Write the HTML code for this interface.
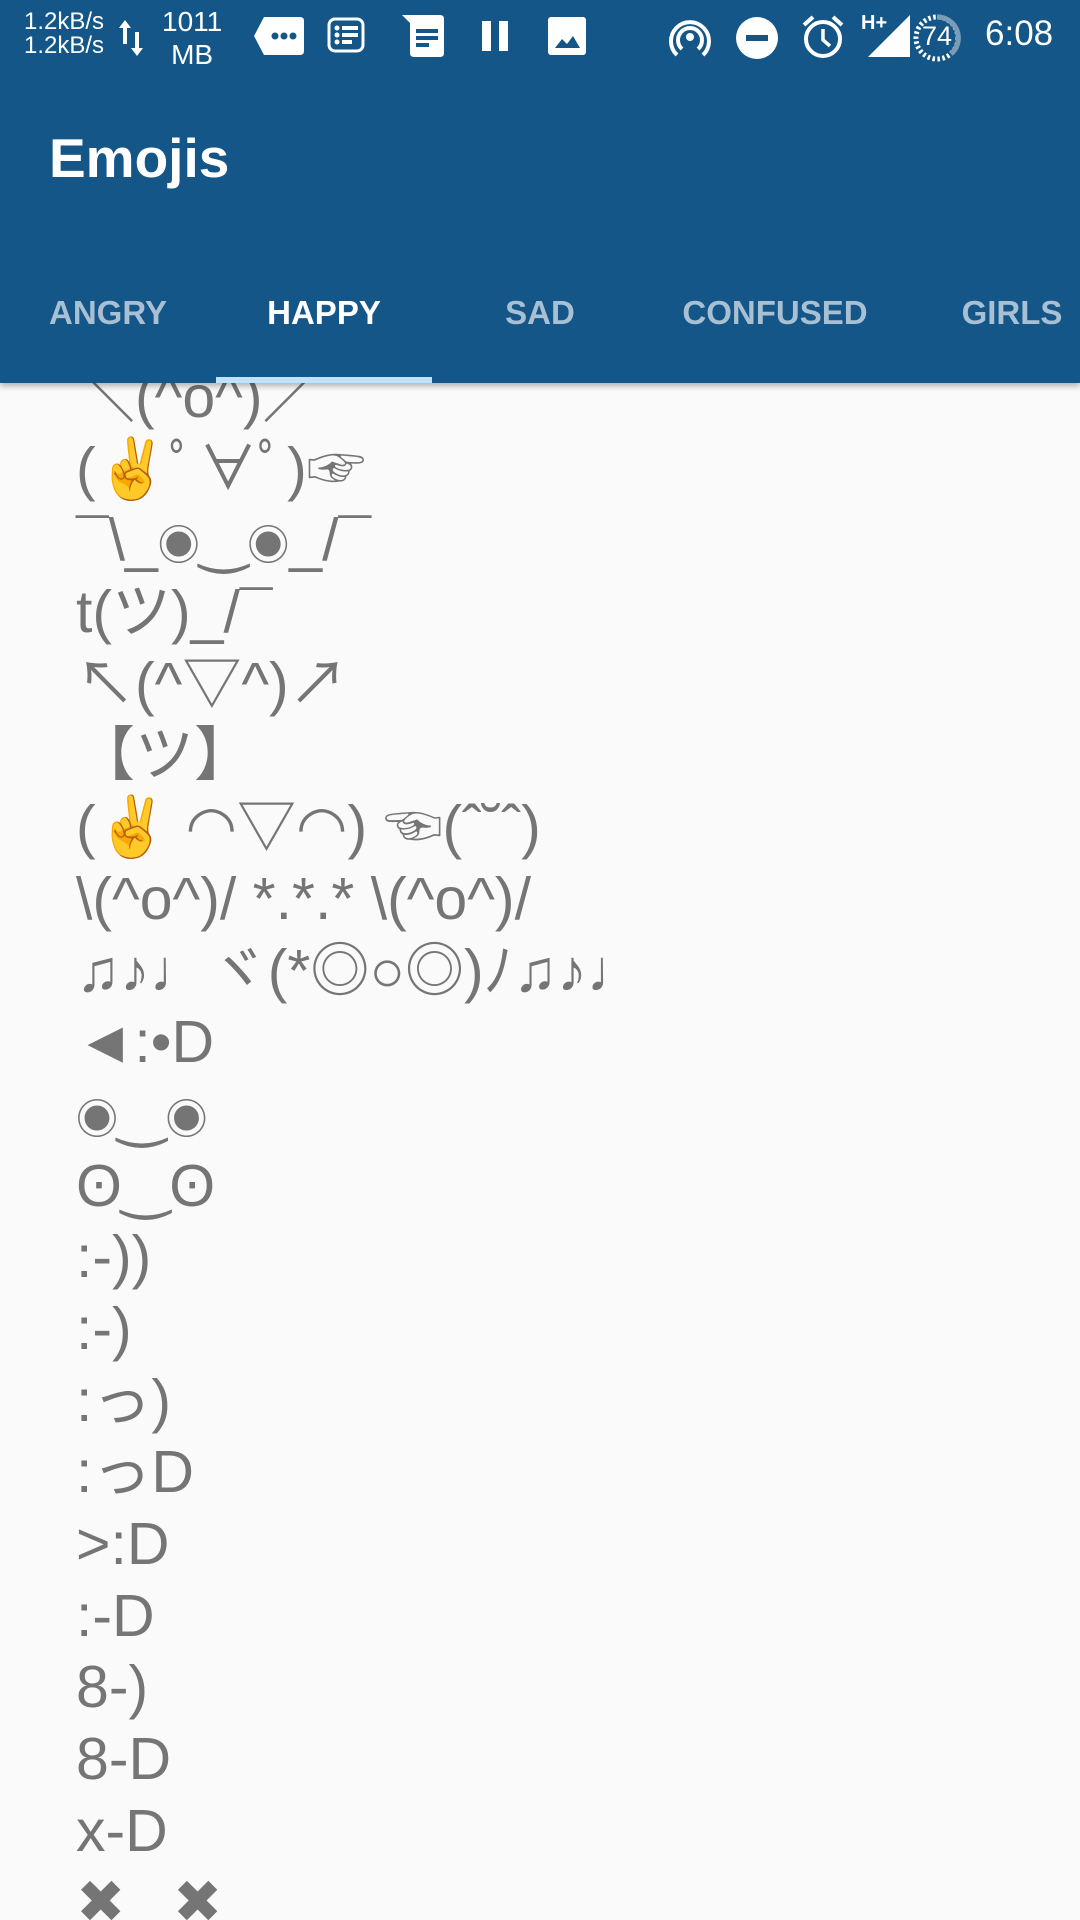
<!DOCTYPE html>
<html><head><meta charset="utf-8"><style>
*{margin:0;padding:0;box-sizing:border-box}
html,body{width:1080px;height:1920px;overflow:hidden;background:#fafafa}
body{position:relative;font-family:"Liberation Sans","Noto Sans CJK JP",sans-serif}
#bar{position:absolute;left:0;top:0;width:1080px;height:383px;background:#135687;z-index:2;box-shadow:0 3px 6px rgba(0,0,0,.3)}
.w{color:#fff;position:absolute;white-space:nowrap}
.tab{position:absolute;top:294px;font-size:33px;font-weight:bold;color:#a9c0d4;text-align:center;width:216px}
#ind{position:absolute;left:216px;top:377px;width:216px;height:6px;background:#bfe3fb}
#list{position:absolute;left:0;top:383px;width:1080px;height:1537px;overflow:hidden}
#inner{position:absolute;left:76px;top:-21px;font-size:59px;color:#757575;white-space:pre}
#inner div{height:71.7px;line-height:71.7px;overflow:visible}
.e{color:#f6cf72}
.s{font-size:42px;line-height:0}
</style></head><body>
<div id="bar">
 <div class="w" style="left:24px;top:10px;font-size:24px;line-height:24px">1.2kB/s<br>1.2kB/s</div>
 <svg class="w" style="left:117px;top:18px" width="28" height="40" viewBox="0 0 28 40"><path d="M8 2 L2 10 H6 V26 H10 V10 H14 Z M20 38 L26 30 H22 V14 H18 V30 H14 Z" fill="#fff"/></svg>
 <div class="w" style="left:162px;top:5px;font-size:28px;line-height:33px;text-align:center">1011<br>MB</div>
 <svg class="w" style="left:254px;top:17px" width="50" height="38"><path d="M10 0 H46 Q50 0 50 4 V34 Q50 38 46 38 H10 L0 19 Z" fill="#fff"/><circle cx="21" cy="19" r="3.5" fill="#135687"/><circle cx="30" cy="19" r="3.5" fill="#135687"/><circle cx="39" cy="19" r="3.5" fill="#135687"/></svg>
 <svg class="w" style="left:327px;top:17px" width="38" height="36"><rect x="2" y="2" width="34" height="32" rx="6" fill="none" stroke="#fff" stroke-width="3"/><circle cx="10" cy="11" r="2.5" fill="#fff"/><circle cx="10" cy="18" r="2.5" fill="#fff"/><circle cx="10" cy="25" r="2.5" fill="#fff"/><rect x="15" y="9" width="16" height="4" fill="#fff"/><rect x="15" y="16" width="16" height="4" fill="#fff"/><rect x="15" y="23" width="10" height="4" fill="#fff"/></svg>
 <svg class="w" style="left:402px;top:15px" width="42" height="42"><path d="M0 0 H38 Q42 0 42 4 V38 Q42 42 38 42 H12 Q8 42 8 38 V8 Z" fill="#fff"/><rect x="14" y="14" width="22" height="4" fill="#135687"/><rect x="14" y="21" width="22" height="4" fill="#135687"/><rect x="14" y="28" width="13" height="4" fill="#135687"/></svg>
 <svg class="w" style="left:482px;top:21px" width="26" height="30"><rect x="0" y="0" width="9" height="30" fill="#fff"/><rect x="17" y="0" width="9" height="30" fill="#fff"/></svg>
 <svg class="w" style="left:548px;top:17px" width="38" height="38"><rect width="38" height="38" rx="3" fill="#fff"/><path d="M7 31 L14 22 L19 27 L25 19 L32 31 Z" fill="#135687"/></svg>
 <svg class="w" style="left:668px;top:17px" width="44" height="42"><circle cx="22" cy="20" r="4" fill="#fff"/><path d="M14 32 A12 12 0 1 1 30 32" fill="none" stroke="#fff" stroke-width="4"/><path d="M9 38 A19 19 0 1 1 35 38" fill="none" stroke="#fff" stroke-width="4"/></svg>
 <svg class="w" style="left:735px;top:16px" width="44" height="44"><circle cx="22" cy="22" r="21" fill="#fff"/><rect x="11" y="19" width="22" height="6" fill="#135687"/></svg>
 <svg class="w" style="left:801px;top:14px" width="44" height="46"><circle cx="22" cy="25" r="17" fill="none" stroke="#fff" stroke-width="4"/><path d="M22 15 V26 L29 32" fill="none" stroke="#fff" stroke-width="3.5"/><path d="M3 11 L12 3 M41 11 L32 3" stroke="#fff" stroke-width="4"/></svg>
 <div class="w" style="left:861px;top:12px;font-size:20px;font-weight:bold">H+</div>
 <svg class="w" style="left:868px;top:15px" width="44" height="42"><path d="M0 42 L42 0 V42 Z" fill="#fff"/></svg>
 <svg class="w" style="left:913px;top:13px" width="48" height="50"><circle cx="24" cy="25" r="21" fill="none" stroke="#fff" stroke-width="5" stroke-dasharray="2.5 2.5"/><path d="M24 4 A21 21 0 0 1 38 41" fill="none" stroke="#7a9cb9" stroke-width="5"/></svg>
 <div class="w" style="left:922px;top:21px;font-size:27px">74</div>
 <div class="w" style="left:985px;top:14px;font-size:35px">6:08</div>
 <div class="w" style="left:49px;top:126px;font-size:55px;font-weight:bold">Emojis</div>
 <div class="tab" style="left:0">ANGRY</div>
 <div class="tab" style="left:216px;color:#fff">HAPPY</div>
 <div class="tab" style="left:432px">SAD</div>
 <div class="tab" style="left:667px">CONFUSED</div>
 <div class="tab" style="left:904px">GIRLS</div>
 <div id="ind"></div>
</div>
<div id="list"><div id="inner"><div>＼(^o^)／</div><div>(<span class="e">✌</span>ﾟ∀ﾟ)☞</div><div>¯\_<span class="s">◉</span>‿<span class="s">◉</span>_/¯</div><div>t(ツ)_/¯</div><div>↖(^▽^)↗</div><div>【ツ】</div><div>(<span class="e">✌</span> ◠▽◠) ☜(ˆ˘ˆ)</div><div>\(^o^)/ *.*.* \(^o^)/</div><div>♫♪♩ヾ(*◎○◎)ﾉ♫♪♩</div><div>◄:•D</div><div><span class="s">◉</span>‿<span class="s">◉</span></div><div>ʘ‿ʘ</div><div>:-))</div><div>:-)</div><div>:っ)</div><div>:っD</div><div>&gt;:D</div><div>:-D</div><div>8-)</div><div>8-D</div><div>x-D</div><div>✖‿✖</div></div></div>
</body></html>
